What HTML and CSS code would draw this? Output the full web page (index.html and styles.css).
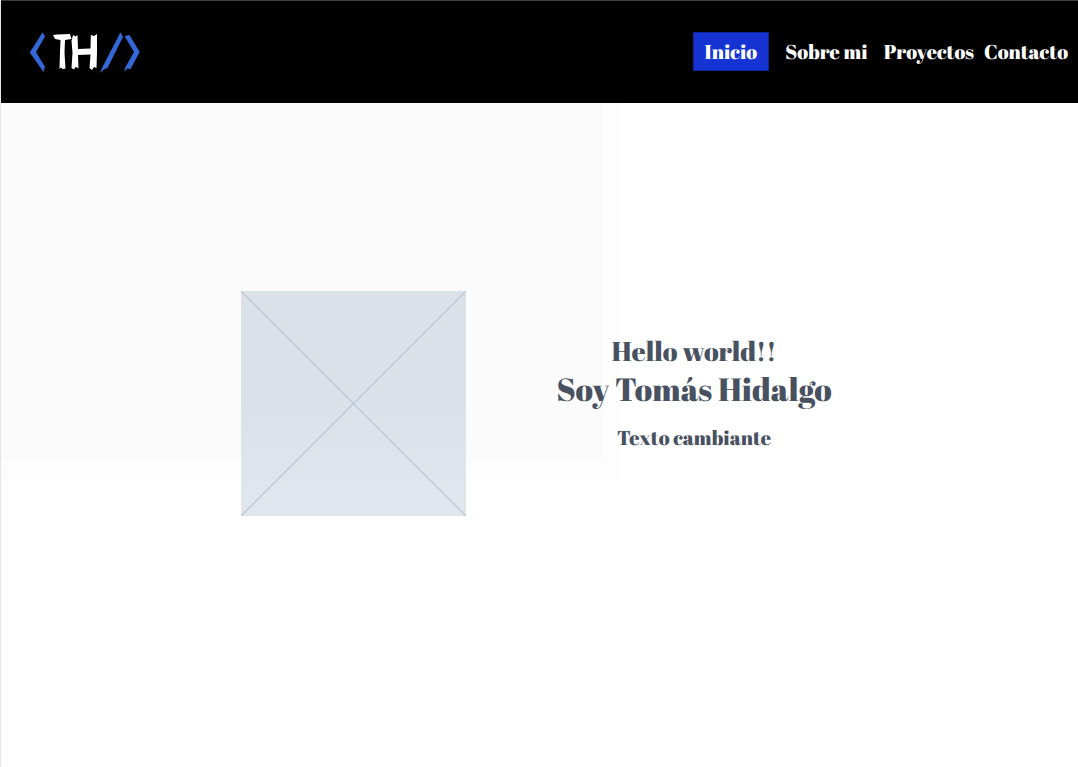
FILE: index.html
```html
<!DOCTYPE html>
<html lang="es">
<head>
  <meta charset="utf-8">
  <meta name="viewport" content="width=device-width, initial-scale=1">
  <title>Tomás Hidalgo</title>
  <link rel="stylesheet" href="styles.css">
</head>
<body>
  <header class="header">
    <a class="logo" href="#" aria-label="TH, inicio">
      <svg width="112" height="44" viewBox="29 30 112 44" aria-hidden="true">
        <g fill="#3468d8">
          <path d="M42.5 33.5L45 37.5L36 53L45 68L43.5 73L29.8 53.5Z"/>
          <path d="M120.500 33.3L123 38L107.500 69L104.500 70L100 74L103 67Z"/>
          <path d="M124.500 37L129.500 36L139.700 53L130.500 70L127.500 69.500L124 72.500L126 67L134 53Z"/>
        </g>
        <g fill="#fff">
          <path d="M53 36L57 35.500L70 35L71.500 40L65 41L64.500 54L65.500 69.500L62.500 70L61 68.500L59.500 70L60 53L60.500 41L55 40Z"/>
          <path d="M73 36L75.500 37.500L77.500 36L78 50L90.500 49.500L90.800 36L94 37L97 35L97 53L96.500 69L94 68L92 71L89.500 69L90.500 55.500L78 56L78.500 69L75.500 68L74 70.500L71.500 69L72.500 54L71.500 42Z"/>
        </g>
      </svg>
    </a>
    <nav class="nav" aria-label="Principal">
      <a class="nav-link nav-link-active" href="#inicio" aria-current="page">Inicio</a>
      <a class="nav-link nav-link-wide" href="#sobre-mi">Sobre mi</a>
      <a class="nav-link" href="#proyectos">Proyectos</a>
      <a class="nav-link" href="#contacto">Contacto</a>
    </nav>
  </header>
  <main class="hero" id="inicio">
    <svg class="portrait" viewBox="0 0 225 225" role="img" aria-label="Foto">
      <defs>
        <linearGradient id="shade" x1="0" y1="0" x2="0" y2="1">
          <stop offset="0.5" stop-color="#dae1e9"/>
          <stop offset="0.9" stop-color="#dfe6ee"/>
        </linearGradient>
      </defs>
      <rect width="225" height="225" fill="url(#shade)"/>
      <path d="M0 0L225 225M225 0L0 225" stroke="#bdc8d7" stroke-width="1.400"/>
    </svg>
    <div class="intro">
      <p class="greeting">Hello world!!</p>
      <h1 class="name">Soy Tomás Hidalgo</h1>
      <p class="tagline">Texto cambiante</p>
    </div>
  </main>
</body>
</html>
```
FILE: styles.css
```css
* {
  box-sizing: border-box;
}

body {
  margin: 0;
  min-height: 100vh;
  display: flex;
  flex-direction: column;
  border-left: 1px solid #e2e6ed;
  background: #fff;
  color: #47515f;
  font-family: "Abril Fatface", "Liberation Serif", serif;
  font-weight: 400;
  text-rendering: geometricPrecision;
}

.header {
  display: flex;
  align-items: center;
  justify-content: space-between;
  min-height: 103px;
  padding: 0 10px 2px 28px;
  border-top: 1px solid #3c3c3c;
  background: #000;
}

.logo,
.nav {
  display: flex;
}

.nav {
  align-items: center;
  gap: 10px;
}

.nav-link {
  color: #fff;
  font-size: 20px;
  line-height: 37px;
  text-decoration: none;
}

.nav-link-active {
  padding: 0 11px;
  border: 1px solid #0c249c;
  background: #1433d2;
}

.nav-link-wide {
  padding: 0 6px;
}

.hero {
  flex: 1;
  display: flex;
  flex-wrap: wrap;
  align-items: center;
  align-content: flex-start;
  justify-content: center;
  gap: 0 90px;
  padding: 188px 6px 24px 0;
  background:
    linear-gradient(#fbfbfb, #fbfbfb) 0 0 / 602px 357px no-repeat,
    linear-gradient(#fdfdfd, #fdfdfd) 0 0 / 618px 377px no-repeat,
    #fff;
}

.portrait {
  display: block;
  width: 225px;
  height: 225px;
}

.intro {
  padding-bottom: 22px;
  text-align: center;
}

.greeting,
.name,
.tagline {
  margin: 0;
  font-weight: 400;
}

.greeting {
  font-size: 27px;
  line-height: 36px;
}

.name {
  font-size: 32px;
  line-height: 42px;
}

.tagline {
  margin-top: 12px;
  font-size: 20px;
  line-height: 30px;
}
```
